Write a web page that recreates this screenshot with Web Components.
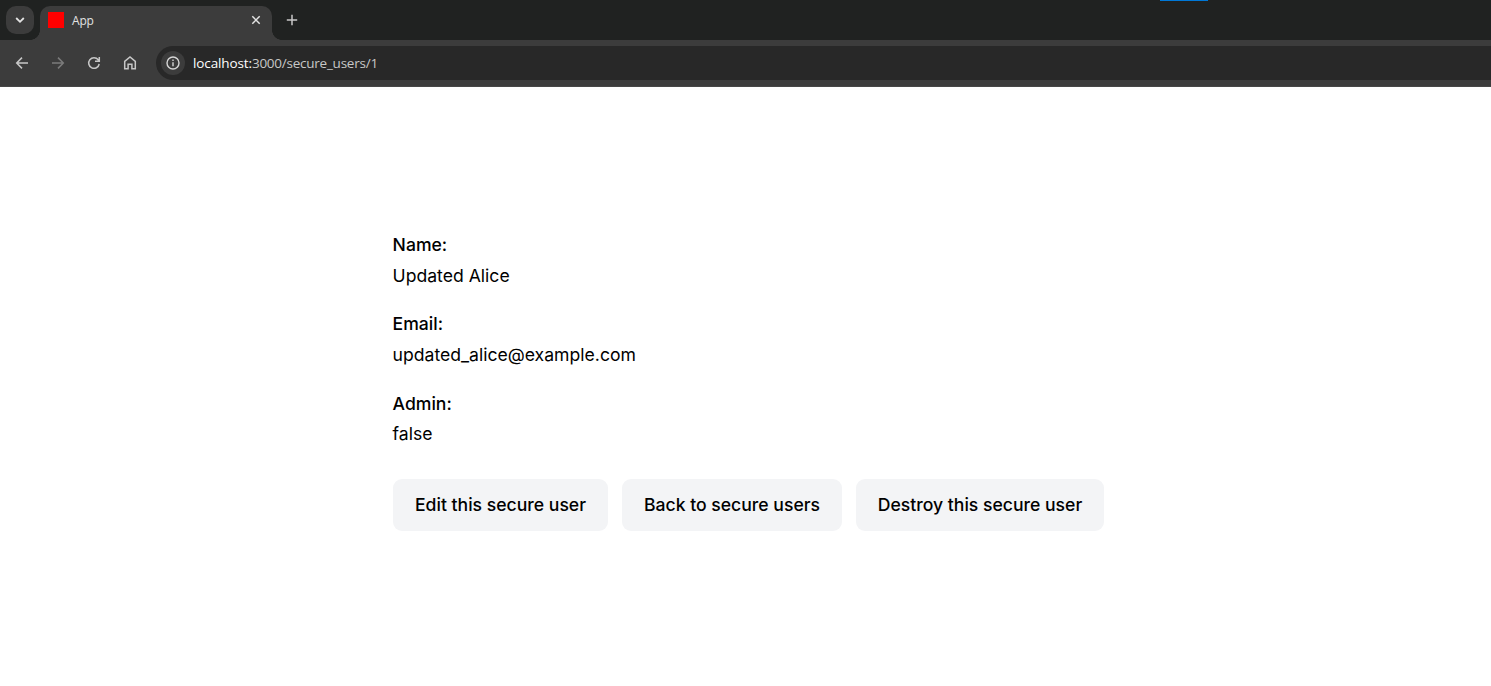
<!DOCTYPE html>
<html lang="en">
<head>
<meta charset="utf-8">
<title>App</title>
<style>
html,body{margin:0;height:100%;background:#fff;overflow:hidden}
body{font-family:Inter,sans-serif;font-size:17.6px;line-height:26.4px;color:#000}
</style>
</head>
<body>
<app-window></app-window>
<script>
function define(name, html) {
  const t = document.createElement('template');
  t.innerHTML = html;
  customElements.define(name, class extends HTMLElement {
    constructor() {
      super();
      this.attachShadow({mode: 'open'}).append(t.content.cloneNode(true));
    }
  });
}

define('tab-strip', `
<style>
:host{display:flex;box-sizing:border-box;height:40px;background:#202221;padding:6px 0 0 6px;position:relative;color:#e3e3e3}
svg{display:block;fill:none;stroke:currentColor}
.search{width:28px;height:28px;border-radius:10px;background:#3c3c3c;display:grid;place-items:center;margin-right:6px}
.tab{box-sizing:border-box;width:232px;height:34px;border-radius:10px 10px 0 0;background:#3c3c3c;display:flex;align-items:center;padding:0 11px 6px 8px;position:relative}
.tab::before,.tab::after{content:"";position:absolute;bottom:0;width:10px;height:10px}
.tab::before{left:-10px;background:radial-gradient(circle at 0 0,transparent 9.6px,#3c3c3c 10.2px)}
.tab::after{right:-10px;background:radial-gradient(circle at 100% 0,transparent 9.6px,#3c3c3c 10.2px)}
.fav{width:16px;height:16px;background:#f00;margin-right:8px}
.title{flex:1;font:12px/16px "Open Sans",sans-serif;letter-spacing:-.2px;padding-top:2px}
.new{margin:8px 0 0 14px;width:12px;height:12px;color:#c7c7c7}
.accent{position:absolute;left:1160px;top:0;width:48px;height:1px;background:#0078d7}
</style>
<div class="search"><svg width="10" height="8" viewBox="0 0 10 8" stroke-width="1.8"><path d="M1.2 2 5 5.8 8.8 2"/></svg></div>
<div class="tab"><span class="fav"></span><span class="title">App</span>
<svg width="10" height="10" viewBox="0 0 10 10" stroke-width="1.5"><path d="M1.3 1.3 8.7 8.7M8.7 1.3 1.3 8.7"/></svg></div>
<svg class="new" viewBox="0 0 12 12" stroke-width="1.5"><path d="M6 .8V11.2M.8 6H11.2"/></svg>
<div class="accent"></div>`);

define('address-bar', `
<style>
:host{flex:1;display:flex;align-items:center;height:34px;background:#282828;border-radius:17px 0 0 17px;font:13.5px/18px "Open Sans",sans-serif;color:#c7c7c7;box-sizing:border-box;padding-left:5px}
.info{width:24px;height:24px;border-radius:50%;background:#3c3c3c;display:grid;place-items:center;margin-right:8px}
svg{display:block}
.url{white-space:pre;letter-spacing:-.24px}
.host{color:#fff;letter-spacing:-.12px}
</style>
<div class="info"><svg width="14" height="14" viewBox="0 0 14 14" fill="none" stroke="#d6d6d6" stroke-width="1.4"><circle cx="7" cy="7" r="6"/><path d="M7 6.2V10.2M7 3.6V5"/></svg></div>
<span class="url"><span class="host">localhost:</span>3000/secure_users/1</span>`);

define('tool-bar', `
<style>
:host{display:flex;align-items:center;box-sizing:border-box;height:47px;background:#3c3c3c;border-bottom:1px solid #474747;padding-left:14px;color:#c7c7c7}
svg{display:block;flex:none;fill:none;stroke:currentColor;stroke-width:1.5;margin-right:20px}
.off{color:#7b7b7b}
.home{margin-right:18px}
</style>
<svg width="16" height="16" viewBox="0 0 16 16"><path d="M14 8H3M8 2.6 2.7 8 8 13.4"/></svg>
<svg class="off" width="16" height="16" viewBox="0 0 16 16"><path d="M2 8H13M8 2.6 13.3 8 8 13.4"/></svg>
<svg width="16" height="16" viewBox="0 0 16 16"><path d="M13.2 9A5.3 5.3 0 1 1 12.2 4.8L13 5.8M13.3 2V6.3H9"/></svg>
<svg class="home" width="16" height="16" viewBox="0 0 16 16"><path d="M2.7 6.3 8 2 13.3 6.3V13.8H9.9V9.2H6.1V13.8H2.7Z"/></svg>
<address-bar></address-bar>`);

define('record-field', `
<style>
:host{display:block;margin-bottom:22px}
strong{display:block;font-weight:500;margin-bottom:4.4px}
</style>
<strong><slot name="label"></slot></strong><div><slot></slot></div>`);

define('action-button', `
<style>
:host{display:block;box-sizing:border-box;height:52px;width:var(--w);padding:12.8px 0;text-align:center;background:#f3f4f6;border-radius:9px;font-weight:500;white-space:nowrap}
</style><slot></slot>`);

define('user-page', `
<style>
:host{display:block;padding:145.2px 0 0 392.6px}
.actions{display:flex;gap:14px;margin:31.4px 0 0 .4px}
</style>
<record-field><span slot="label">Name:</span>Updated Alice</record-field>
<record-field><span slot="label">Email:</span>updated_alice@example.com</record-field>
<record-field style="margin-bottom:0"><span slot="label">Admin:</span>false</record-field>
<div class="actions">
<action-button style="--w:215px">Edit this secure user</action-button>
<action-button style="--w:220px">Back to secure users</action-button>
<action-button style="--w:248px">Destroy this secure user</action-button>
</div>`);

define('app-window', `
<style>:host{display:flex;flex-direction:column}</style>
<tab-strip></tab-strip><tool-bar></tool-bar><user-page></user-page>`);
</script>
</body>
</html>
